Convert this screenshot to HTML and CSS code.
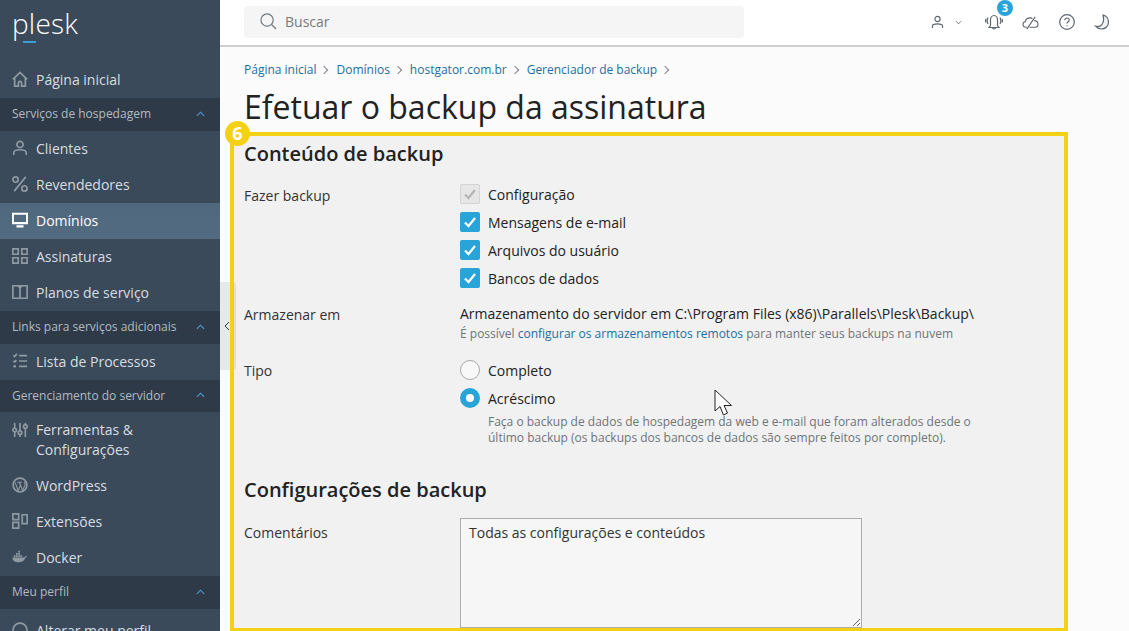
FILE: index.html
```html
<!DOCTYPE html>
<html lang="pt-BR">
<head>
<meta charset="utf-8">
<title>Efetuar o backup da assinatura</title>
<link rel="stylesheet" href="styles.css">
</head>
<body>
<div class="app">
  <aside class="sidebar">
    <div class="logo"><span class="logo-text">plesk</span><span class="logo-bar"></span></div>
    <nav>
      <a class="item"><svg class="ico" viewBox="0 0 18 18"><path d="M1 9.500 9 1.500l8 8M3 7.500V17h4.200v-3.500a1.800 1.800 0 0 1 3.600 0V17H15V7.500"/></svg>Página inicial</a>
      <div class="group"><span>Serviços de hospedagem</span><svg class="chev" viewBox="0 0 10 6"><path d="M1 5 5 1l4 4"/></svg></div>
      <a class="item"><svg class="ico" viewBox="0 0 18 18"><circle cx="9" cy="5" r="3.500"/><path d="M2 17v-2.500C2 12 5 11 9 11s7 1 7 3.500V17"/></svg>Clientes</a>
      <a class="item"><svg class="ico" viewBox="0 0 18 18"><circle cx="4" cy="4" r="3"/><circle cx="14" cy="14" r="3"/><path d="M15.500 1 2.500 17"/></svg>Revendedores</a>
      <a class="item active"><svg class="ico" viewBox="0 0 18 18"><path class="thick" d="M1 2h16v10.500H1zM5 16.200h8"/></svg>Domínios</a>
      <a class="item"><svg class="ico" viewBox="0 0 18 18"><path d="M1 1h6v6H1zM11 1h6v6h-6zM1 11h6v6H1zM11 11h6v6h-6z"/></svg>Assinaturas</a>
      <a class="item"><svg class="ico" viewBox="0 0 18 18"><path d="M1 2h16v14H1zM6.500 2 9 4l2.500-2M9 4v12"/></svg>Planos de serviço</a>
      <div class="group"><span>Links para serviços adicionais</span><svg class="chev" viewBox="0 0 10 6"><path d="M1 5 5 1l4 4"/></svg></div>
      <a class="item"><svg class="ico" viewBox="0 0 18 18"><path d="m1.500 2.500 1.500 1.500 2.500-3M8 3h9M1.500 9l1.500 1 2-2M8 9h9M8 15h9"/><circle class="dot" cx="3" cy="15" r="1.500"/></svg>Lista de Processos</a>
      <div class="group short"><span>Gerenciamento do servidor</span><svg class="chev" viewBox="0 0 10 6"><path d="M1 5 5 1l4 4"/></svg></div>
      <a class="item tall"><svg class="ico" viewBox="0 0 18 18"><path d="M3 1v6M3 11v6M9 1v9M9 14v3M15 1v2M15 7v10"/><circle cx="3" cy="9" r="2"/><circle cx="9" cy="12" r="2"/><circle cx="15" cy="5" r="2"/></svg><span>Ferramentas &amp;<br>Configurações</span></a>
      <a class="item"><svg class="ico" viewBox="0 0 18 18"><circle cx="9" cy="9" r="7.800"/><path class="thin" d="M3.500 6 7 15.500 9.500 9 8 6M6 6h5M8.500 6 12 15.500 14.500 9c.5-1.500 0-3-1-3.500"/></svg>WordPress</a>
      <a class="item"><svg class="ico" viewBox="0 0 18 18"><path d="M1 1h6.500v6.500H1zM1 10.500h6.500V17H1zM11.500 2H17v10h-5.500z"/></svg>Extensões</a>
      <a class="item"><svg class="ico docker" viewBox="0 0 18 18"><path d="M.5 9.500h13c.7 0 1.300-.7 1.500-1.500.8.300 1.800.3 2.500 0-.5 1-1.500 1.700-2.500 1.800C14 13 11 15 7.500 15 3 15 .5 13 .5 9.500z"/><path d="M2 7h2v2H2zM4.500 7h2v2h-2zM7 7h2v2H7zM9.500 7h2v2h-2zM4.500 4.500h2v2h-2zM7 4.500h2v2H7zM7 2h2v2H7z"/></svg>Docker</a>
      <div class="group"><span>Meu perfil</span><svg class="chev" viewBox="0 0 10 6"><path d="M1 5 5 1l4 4"/></svg></div>
      <a class="item last"><svg class="ico" viewBox="0 0 18 18"><circle cx="9" cy="9" r="7.800"/></svg>Alterar meu perfil</a>
    </nav>
  </aside>

  <div class="main">
    <header class="topbar">
      <div class="search">
        <svg class="search-ico" viewBox="0 0 18 18"><circle cx="7.500" cy="7.500" r="6.500"/><path d="m12.500 12.500 4.500 4.500"/></svg>
        <span>Buscar</span>
      </div>
      <div class="tools">
        <svg class="tool user" viewBox="0 0 14 14"><circle cx="7" cy="3.800" r="2.800"/><path d="M1.500 13.500v-2C1.500 9.500 3.500 9 7 9s5.500.5 5.500 2.500v2"/></svg>
        <svg class="caret" viewBox="0 0 8 5"><path d="m1 1 3 3 3-3"/></svg>
        <span class="bell-wrap">
          <svg class="tool bell" viewBox="0 0 18 16"><path d="M5.500 11.500V6C5.500 3.500 7 1.500 9 1.500s3.500 2 3.500 4.500v5.500l1.500 2H4zM7.500 13.500c0 1 .6 1.500 1.500 1.500s1.500-.5 1.500-1.500M3 3.500C2 5.500 2 8 3 10M15 3.500c1 2 1 4.500 0 6.500M1 5c-.5 1-.5 2.500 0 3.500M17 5c.5 1 .5 2.500 0 3.500"/></svg>
          <span class="badge">3</span>
        </span>
        <svg class="tool cloud" viewBox="0 0 18 16"><path d="M5 13H4C2 13 1 11.500 1 10s1-3 2.500-3C4 4.500 6 3 8.500 3c1 0 2 .3 2.500.8M13 6c2-.2 4 1.500 4 3.500S15.500 13 14 13H8M14 2 5 15"/></svg>
        <svg class="tool help" viewBox="0 0 16 16"><circle cx="8" cy="8" r="7.300"/><path d="M5.800 6.200C5.800 4.800 6.800 4 8 4s2.200.9 2.200 2c0 1.800-2.200 1.800-2.200 3.600M8 11.200v1"/></svg>
        <svg class="tool moon" viewBox="0 0 16 16"><path d="M9 1c3 .8 5.500 3.500 5.500 7 0 4-3 7-7 7-2.500 0-4.500-1-6-2.800 4.500 1.300 10-2 7.500-11.200z"/></svg>
      </div>
    </header>

    <div class="page">
      <ol class="crumbs">
        <li><a>Página inicial</a></li>
        <li><a>Domínios</a></li>
        <li><a>hostgator.com.br</a></li>
        <li><a>Gerenciador de backup</a></li>
      </ol>
      <h1>Efetuar o backup da assinatura</h1>
      <section class="box">
        <span class="marker">6</span>
        <h2>Conteúdo de backup</h2>
        <div class="row checks-row">
          <div class="label">Fazer backup</div>
          <div class="field">
            <div class="opt"><span class="check off"><svg viewBox="0 0 20 20"><path d="m5 10.500 3.500 3.500 6.500-8"/></svg></span>Configuração</div>
            <div class="opt"><span class="check"><svg viewBox="0 0 20 20"><path d="m5 10.500 3.500 3.500 6.500-8"/></svg></span>Mensagens de e-mail</div>
            <div class="opt"><span class="check"><svg viewBox="0 0 20 20"><path d="m5 10.500 3.500 3.500 6.500-8"/></svg></span>Arquivos do usuário</div>
            <div class="opt"><span class="check"><svg viewBox="0 0 20 20"><path d="m5 10.500 3.500 3.500 6.500-8"/></svg></span>Bancos de dados</div>
          </div>
        </div>
        <div class="row store-row">
          <div class="label">Armazenar em</div>
          <div class="field">
            <div class="store">Armazenamento do servidor em C:\Program Files (x86)\Parallels\Plesk\Backup\</div>
            <div class="hint">É possível <a>configurar os armazenamentos remotos</a> para manter seus backups na nuvem</div>
          </div>
        </div>
        <div class="row type-row">
          <div class="label">Tipo</div>
          <div class="field">
            <div class="opt"><span class="radio"></span>Completo</div>
            <div class="opt"><span class="radio on"></span>Acréscimo</div>
            <div class="desc">Faça o backup de dados de hospedagem da web e e-mail que foram alterados desde o<br>último backup (os backups dos bancos de dados são sempre feitos por completo).</div>
          </div>
        </div>
        <h2 class="second">Configurações de backup</h2>
        <div class="row">
          <div class="label comment-label">Comentários</div>
          <div class="field"><textarea class="comment">Todas as configurações e conteúdos</textarea></div>
        </div>
      </section>
      <svg class="cursor" viewBox="0 0 19 28"><path d="M1 1v21l5-4.500L9.500 26l4-2-3.500-7.500h7.500z"/></svg>
    </div>
    <button class="collapse" type="button"><svg viewBox="0 0 6 10"><path d="M5 1 1 5l4 4"/></svg></button>
  </div>
</div>
</body>
</html>
```
FILE: styles.css
```css
* { box-sizing: border-box; }
html, body { margin: 0; height: 100%; overflow: hidden; }
body { font-family: "Open Sans", "Liberation Sans", sans-serif; font-size: 14px; color: #222; background: #fbfbfb; }
.app { display: flex; height: 631px; width: 1129px; overflow: hidden; }

.sidebar { width: 220px; flex: none; background: #3a4a5a; color: #d9dde1; overflow: hidden; }
.logo { height: 62px; padding: 3px 0 0 12px; position: relative; }
.logo-text { display: block; font-family: "Open Sans", sans-serif; font-weight: 300; font-size: 28px; line-height: 40px; color: #fff; letter-spacing: .2px; }
.logo-bar { position: absolute; left: 23px; top: 41px; width: 13px; height: 2px; background: #3d9bd6; }
.item { display: flex; align-items: center; height: 36px; padding: 0 0 2px 12px; font-size: 14px; color: #d9dde1; }
.item.tall { height: 56px; line-height: 20px; padding-bottom: 0; }
.item.last { margin-top: 4px; }
.item.active { background: linear-gradient(#4f687e, #536b80); color: #fff; }
.ico { width: 16px; height: 16px; margin-right: 8px; flex: none; fill: none; stroke: #8f99a3; stroke-width: 1.900; }
.item.tall .ico { align-self: flex-start; margin-top: 10px; }
.active .ico { stroke: #fff; }
.ico .thick { stroke-width: 2.400; }
.ico .thin { stroke-width: 1.200; }
.ico .dot { fill: #8f99a3; stroke: none; }
.ico.docker { fill: #8f99a3; stroke: none; }
.group { display: flex; align-items: center; justify-content: space-between; height: 33px; padding: 0 12px 2px; background: #2e3a47; color: #b3bac1; font-size: 12px; }
.group.short { height: 32px; }
.chev { width: 9px; height: 6px; margin-right: 3px; fill: none; stroke: #4a9fd8; stroke-width: 1.200; }

.main { flex: 1; min-width: 0; position: relative; }
.topbar { height: 47px; background: #fff; border-bottom: 2px solid #cfcfcf; display: flex; align-items: flex-start; justify-content: space-between; padding: 6px 0 0 24px; }
.search { width: 500px; height: 32px; border-radius: 4px; background: #f5f5f5; display: flex; align-items: center; padding: 0 0 2px 16px; color: #767b80; font-size: 14px; }
.search-ico { width: 17px; height: 17px; margin-right: 8px; fill: none; stroke: #767b80; stroke-width: 1.300; }
.tools { display: flex; align-items: center; height: 32px; padding-right: 19px; }
.tool { fill: none; stroke: #5f666d; stroke-width: 1.200; }
.user { width: 13px; height: 14px; margin-right: 11px; }
.caret { width: 7px; height: 5px; margin-right: 23px; fill: none; stroke: #5f666d; stroke-width: 1; }
.bell-wrap { position: relative; display: flex; margin-right: 19px; }
.bell { width: 18px; height: 16px; }
.badge { position: absolute; left: 12px; top: -14px; width: 16px; height: 16px; border-radius: 50%; background: #28a4d9; color: #fff; font-size: 11px; font-weight: 700; line-height: 16px; text-align: center; }
.cloud { width: 17px; height: 15px; margin-right: 20px; }
.help { width: 16px; height: 16px; margin-right: 19px; }
.moon { width: 16px; height: 16px; fill: #f2f2f2; stroke: #5f666d; }

.page { padding-left: 10px; position: relative; z-index: 1; }
.crumbs { list-style: none; margin: 0; padding: 14px 0 0 14px; display: flex; height: 31px; font-size: 12px; line-height: 18px; color: #6f7478; }
.crumbs li { display: flex; align-items: center; }
.crumbs li::after { content: ""; width: 5px; height: 5px; border-top: 1px solid #80868b; border-right: 1px solid #80868b; transform: rotate(45deg); margin: 0 9px 0 5px; }
.crumbs a { color: #1b6f9f; }
h1 { margin: 0; padding-left: 14px; height: 54px; font-size: 32px; font-weight: 400; line-height: 44px; padding-top: 7px; color: #222; }

.box { position: relative; width: 838px; height: 499px; border: 4px solid #f5d116; border-bottom-width: 3px; background: rgba(0, 0, 0, .04); padding: 0 10px; }
.marker { position: absolute; left: -9px; top: -15px; width: 25px; height: 25px; border-radius: 50%; background: #f5d116; color: #fff; font-size: 18px; font-weight: 700; line-height: 25px; text-align: center; }
h2 { margin: 0; font-size: 20px; font-weight: 600; line-height: 28px; padding-top: 4px; height: 44px; color: #222; }
h2.second { height: 42px; padding-top: 0; }
.row { display: grid; grid-template-columns: 216px 1fr; }
.label { line-height: 20px; color: #333; }
.checks-row { height: 124px; }
.checks-row .label { margin-top: 6px; }
.store-row { height: 56px; }
.store-row .label { margin-top: 1px; }
.type-row { height: 116px; }
.type-row .label { margin-top: 1px; }
.comment-label { padding-top: 5px; }
.opt { display: flex; align-items: center; height: 28px; }
.opt .check, .opt .radio { margin-right: 8px; }
.check { width: 20px; height: 20px; border-radius: 2px; background: #28a4d9; flex: none; }
.check svg { display: block; fill: none; stroke: #fff; stroke-width: 2.200; }
.check.off { background: #e6e6e6; border: 1px solid #d3d3d3; }
.check.off svg { stroke: #b5b5b5; margin: -1px; width: 20px; height: 20px; }
.radio { width: 20px; height: 20px; border-radius: 50%; border: 1px solid #a9a9a9; background: #f8f8f8; flex: none; }
.radio.on { border: 6px solid #28a4d9; background: #fff; }
.store { line-height: 20px; white-space: nowrap; }
.hint { font-size: 12px; line-height: 18px; margin-top: 1px; color: #6f7478; white-space: nowrap; }
.hint a { color: #1b6f9f; }
.type-row .field { margin-top: -4px; }
.desc { padding-left: 28px; margin-top: 2px; font-size: 12px; line-height: 16px; color: #6f7478; white-space: nowrap; }
.comment { display: block; width: 402px; height: 110px; margin: 0; padding: 4px 8px; background: #f6f6f6; border: 1px solid #adadad; border-radius: 0; font: 14px/20px "Open Sans", sans-serif; color: #333; }

.cursor { position: absolute; left: 494px; top: 342px; width: 19px; height: 28px; fill: #fff; stroke: #222; stroke-width: 1; }
.collapse { position: absolute; left: 0; top: 282px; width: 16px; height: 88px; padding: 0 0 0 4px; border: 0; border-radius: 0 4px 4px 0; background: #e8e8e8; display: flex; align-items: center; }
.collapse svg { width: 6px; height: 10px; fill: none; stroke: #333; stroke-width: 1; }
```
